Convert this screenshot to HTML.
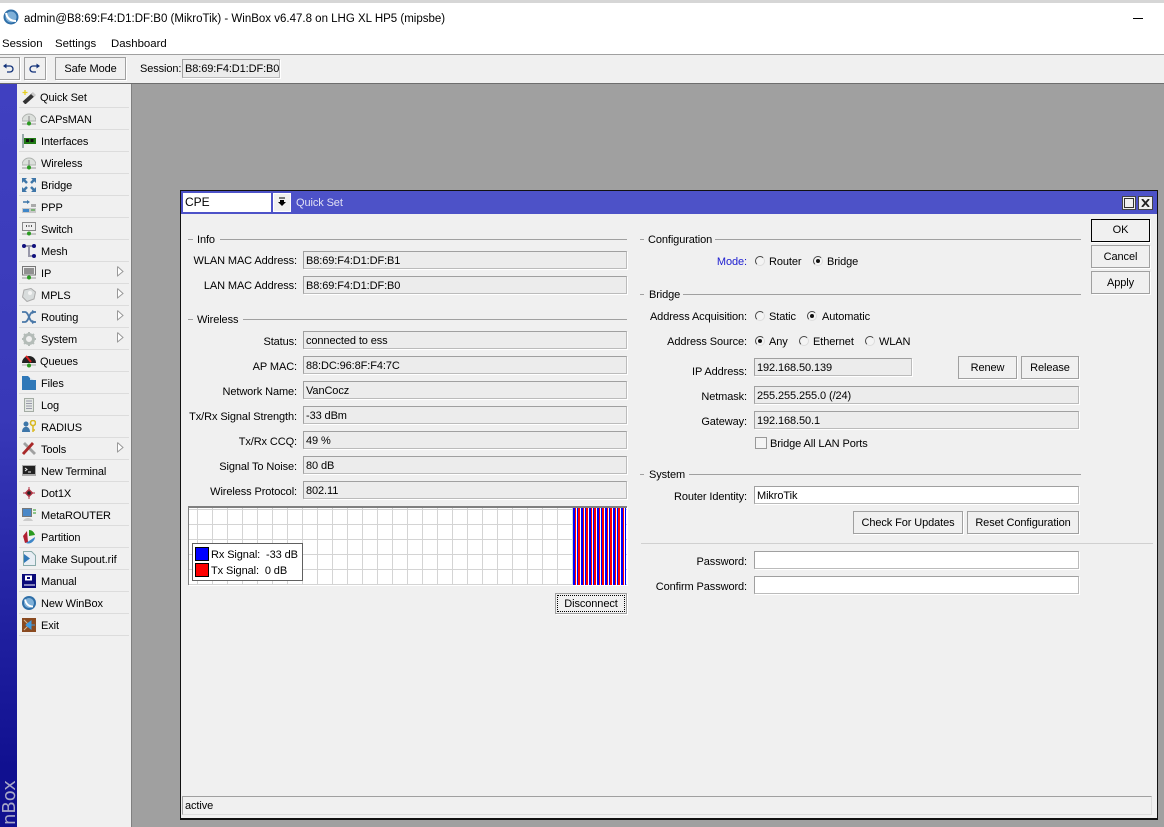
<!DOCTYPE html>
<html><head><meta charset="utf-8"><title>WinBox</title>
<style>
html,body{margin:0;padding:0;width:1164px;height:827px;overflow:hidden;background:#a0a0a0;font-family:"Liberation Sans",sans-serif;font-size:11px;letter-spacing:-.1px;color:#000}
div,span{position:absolute;box-sizing:border-box;white-space:nowrap}
.l{height:18px;line-height:20px;text-align:right}
.t{height:18px;line-height:20px}
.f{height:18px;line-height:18px;padding-left:2px;background:#ececec;border:1px solid;border-color:#a0a0a0 #bbb #bbb #a0a0a0;box-shadow:1px 1px 0 #fff}
.w{background:#fff}
.b{background:#f0f0f0;border:1px solid #a0a0a0;box-shadow:1px 1px 0 #fff;text-align:center}
.g{height:1px;background:#a0a0a0}
.s{left:19px;width:110px;height:1px;background:#dcdcdc}
.m{left:41px;height:18px;line-height:20px}
.r{width:10px;height:10px;border-radius:50%;background:#f4f4f4;border:1px solid #444;border-right-color:#ddd;border-bottom-color:#ddd}
.r.o::after{content:"";position:absolute;left:2px;top:2px;width:4px;height:4px;border-radius:50%;background:#111}
.a{left:117px;width:7px;height:11px}
svg{position:absolute}
</style></head><body>

<!-- top bars -->
<div style="left:0;top:0;width:1164px;height:4px;background:#d6d6d6"></div>
<div style="left:0;top:3px;width:1164px;height:51px;background:#fff"></div>
<div style="left:0;top:54px;width:1164px;height:1px;background:#a0a0a0"></div>
<div style="left:0;top:55px;width:1164px;height:28px;background:#f0f0f0"></div>
<div style="left:0;top:83px;width:1164px;height:1px;background:#6e6e6e"></div>

<svg style="left:3px;top:9px" width="16" height="16" viewBox="0 0 16 16"><circle cx="8" cy="8" r="7.5" fill="#2f6fa8"/><circle cx="8" cy="8" r="5.5" fill="#7fb0d8"/><path d="M3 4c1 5 4 8 10 8" stroke="#fff" stroke-width="2" fill="none"/></svg>
<div class="t" style="left:24px;top:9px;font-size:11.5px;letter-spacing:0">admin@B8:69:F4:D1:DF:B0 (MikroTik) - WinBox v6.47.8 on LHG XL HP5 (mipsbe)</div>
<div style="left:1133px;top:18px;width:10px;height:1px;background:#000"></div>
<div class="t" style="left:2px;top:34px;font-size:11.4px;letter-spacing:0">Session</div>
<div class="t" style="left:55px;top:34px;font-size:11.4px;letter-spacing:0">Settings</div>
<div class="t" style="left:111px;top:34px;font-size:11.4px;letter-spacing:0">Dashboard</div>

<!-- toolbar -->
<div class="b" style="left:-1px;top:57px;width:21px;height:23px"></div>
<svg style="left:2px;top:63px" width="13" height="11" viewBox="0 0 13 11"><path d="M3 3h5a3 3 0 0 1 0 6H5" fill="none" stroke="#12327a" stroke-width="1.3"/><path d="M1 3l3.5-2.5v5z" fill="#12327a"/></svg>
<div class="b" style="left:24px;top:57px;width:22px;height:23px"></div>
<svg style="left:28px;top:63px" width="13" height="11" viewBox="0 0 13 11"><path d="M10 3H5a3 3 0 0 0 0 6h3" fill="none" stroke="#12327a" stroke-width="1.3"/><path d="M12 3L8.5.5v5z" fill="#12327a"/></svg>
<div class="b" style="left:55px;top:57px;width:71px;height:23px;line-height:22px">Safe Mode</div>
<div class="t" style="left:140px;top:59px">Session:</div>
<div class="f" style="left:182px;top:59px;width:98px;height:19px;line-height:18px">B8:69:F4:D1:DF:B0</div>

<!-- sidebar -->
<div style="left:0;top:84px;width:17px;height:743px;background:linear-gradient(#4040c0,#3838b8 45%,#101090 92%,#101090)"></div>
<div style="left:17px;top:84px;width:114px;height:743px;background:#f0f0f0"></div>
<div style="left:131px;top:84px;width:1px;height:743px;background:#808080"></div>
<div style="left:0;top:780px;width:17px;height:47px;overflow:hidden"><span style="left:1px;top:45px;font-size:18px;line-height:18px;letter-spacing:0;font-family:'DejaVu Sans',sans-serif;color:#a8a8c8;transform-origin:0 0;transform:rotate(-90deg);">nBox</span></div>

<div class="s" style="top:107px"></div><div class="s" style="top:129px"></div><div class="s" style="top:151px"></div><div class="s" style="top:173px"></div><div class="s" style="top:195px"></div><div class="s" style="top:217px"></div><div class="s" style="top:239px"></div><div class="s" style="top:261px"></div><div class="s" style="top:283px"></div><div class="s" style="top:305px"></div><div class="s" style="top:327px"></div><div class="s" style="top:349px"></div><div class="s" style="top:371px"></div><div class="s" style="top:393px"></div><div class="s" style="top:415px"></div><div class="s" style="top:437px"></div><div class="s" style="top:459px"></div><div class="s" style="top:481px"></div><div class="s" style="top:503px"></div><div class="s" style="top:525px"></div><div class="s" style="top:547px"></div><div class="s" style="top:569px"></div><div class="s" style="top:591px"></div><div class="s" style="top:613px"></div><div class="s" style="top:635px"></div>

<div class="m" style="top:88px;left:40px">Quick Set</div>
<div class="m" style="top:110px;left:40px">CAPsMAN</div>
<div class="m" style="top:132px">Interfaces</div>
<div class="m" style="top:154px">Wireless</div>
<div class="m" style="top:176px">Bridge</div>
<div class="m" style="top:198px">PPP</div>
<div class="m" style="top:220px">Switch</div>
<div class="m" style="top:242px">Mesh</div>
<div class="m" style="top:264px">IP</div>
<div class="m" style="top:286px">MPLS</div>
<div class="m" style="top:308px">Routing</div>
<div class="m" style="top:330px">System</div>
<div class="m" style="top:352px;left:40px">Queues</div>
<div class="m" style="top:374px">Files</div>
<div class="m" style="top:396px">Log</div>
<div class="m" style="top:418px">RADIUS</div>
<div class="m" style="top:440px">Tools</div>
<div class="m" style="top:462px">New Terminal</div>
<div class="m" style="top:484px">Dot1X</div>
<div class="m" style="top:506px">MetaROUTER</div>
<div class="m" style="top:528px">Partition</div>
<div class="m" style="top:550px">Make Supout.rif</div>
<div class="m" style="top:572px">Manual</div>
<div class="m" style="top:594px">New WinBox</div>
<div class="m" style="top:616px">Exit</div>

<!-- submenu arrows -->
<svg class="a" style="top:266px" width="7" height="11"><path d="M.5.5V10.5M.5.5L6 5.5.5 10" fill="#fff" stroke="#999"/></svg>
<svg class="a" style="top:288px" width="7" height="11"><path d="M.5.5V10.5M.5.5L6 5.5.5 10" fill="#fff" stroke="#999"/></svg>
<svg class="a" style="top:310px" width="7" height="11"><path d="M.5.5V10.5M.5.5L6 5.5.5 10" fill="#fff" stroke="#999"/></svg>
<svg class="a" style="top:332px" width="7" height="11"><path d="M.5.5V10.5M.5.5L6 5.5.5 10" fill="#fff" stroke="#999"/></svg>
<svg class="a" style="top:442px" width="7" height="11"><path d="M.5.5V10.5M.5.5L6 5.5.5 10" fill="#fff" stroke="#999"/></svg>

<!-- sidebar icons -->
<svg style="left:22px;top:90px" width="14" height="14" viewBox="0 0 14 14"><path d="M2 13L12 4" stroke="#333" stroke-width="4"/><path d="M10.500 5.500L12.500 3.500" stroke="#ccc" stroke-width="4"/><path d="M3 0v5M.5 2.500h5" stroke="#e6d020" stroke-width="1.300"/></svg>
<svg style="left:22px;top:112px" width="14" height="14" viewBox="0 0 14 14"><path d="M0 9a7 7 0 0 1 14 0z" fill="#dce0dc" stroke="#b0b4b0"/><path d="M7 4v7" stroke="#888"/><path d="M0 12h14" stroke="#999"/><circle cx="7" cy="11.500" r="2" fill="#2a9a20"/></svg>
<svg style="left:22px;top:134px" width="14" height="14" viewBox="0 0 14 14"><path d="M1 0v14" stroke="#9aa" stroke-width="2"/><rect x="2" y="4" width="12" height="6" fill="#1f7a14"/><rect x="4" y="5" width="3" height="3" fill="#111"/><rect x="8.500" y="5" width="3" height="3" fill="#111"/></svg>
<svg style="left:22px;top:156px" width="14" height="14" viewBox="0 0 14 14"><path d="M0 9a7 7 0 0 1 14 0z" fill="#dce0dc" stroke="#b0b4b0"/><path d="M7 4v7" stroke="#888"/><path d="M0 12h14" stroke="#999"/><circle cx="7" cy="11.500" r="2" fill="#2a9a20"/></svg>
<svg style="left:22px;top:178px" width="14" height="14" viewBox="0 0 14 14"><path d="M1 1l4 4M13 1L9 5M1 13l4-4M13 13L9 9" stroke="#3e76a8" stroke-width="2.500"/><path d="M0 0h5L0 5zM14 0H9l5 5zM0 14h5L0 9zM14 14H9l5-5z" fill="#3e76a8"/></svg>
<svg style="left:22px;top:200px" width="14" height="14" viewBox="0 0 14 14"><path d="M1 2h4" stroke="#3e76a8" stroke-width="1.500"/><path d="M5 0l3 2-3 2z" fill="#3e76a8"/><rect x="0" y="8" width="14" height="5" fill="#c8c8c8"/><rect x="1" y="9" width="6" height="3" fill="#3e86c8"/><rect x="9" y="4" width="5" height="3" fill="#aaa"/><path d="M9 10h4" stroke="#2a9a20"/></svg>
<svg style="left:22px;top:222px" width="14" height="14" viewBox="0 0 14 14"><rect x="0.500" y="0.500" width="13" height="8" fill="#eee" stroke="#888"/><path d="M4 4h1M6.500 4h1M9 4h1" stroke="#222" stroke-width="1.500"/><path d="M0 12h14" stroke="#999"/><circle cx="7" cy="11.500" r="2" fill="#2a9a20"/></svg>
<svg style="left:22px;top:244px" width="14" height="14" viewBox="0 0 14 14"><path d="M2 2h10M7 2v10h5" stroke="#99a" stroke-width="2" fill="none"/><circle cx="2" cy="2" r="2" fill="#12127e"/><circle cx="12" cy="2" r="2" fill="#12127e"/><circle cx="12" cy="12" r="2" fill="#12127e"/></svg>
<svg style="left:22px;top:266px" width="14" height="14" viewBox="0 0 14 14"><rect x="0.500" y="0.500" width="13" height="8.500" fill="#eee" stroke="#777"/><path d="M2 3h10M2 5h10M2 7h10" stroke="#333"/><path d="M0 12h14" stroke="#999"/><circle cx="7" cy="11.500" r="2" fill="#2a9a20"/></svg>
<svg style="left:22px;top:288px" width="14" height="14" viewBox="0 0 14 14"><path d="M2 2L9 0.500 13.500 4 12 11 5 13.500 0.500 9z" fill="#d8dcdc" stroke="#aaa"/><circle cx="8" cy="5" r="2" fill="#f4f4f4"/></svg>
<svg style="left:22px;top:310px" width="14" height="14" viewBox="0 0 14 14"><path d="M0 2h3c4 0 4 10 8 10h3M0 12h3c4 0 4-10 8-10h3" stroke="#4a78a8" stroke-width="1.800" fill="none"/><path d="M10 0l4 2-4 2zM10 10l4 2-4 2z" fill="#4a78a8"/></svg>
<svg style="left:22px;top:332px" width="14" height="14" viewBox="0 0 14 14"><circle cx="7" cy="7" r="4.500" fill="none" stroke="#b4bcb8" stroke-width="3"/><path d="M7 0v14M0 7h14M2 2l10 10M12 2L2 12" stroke="#b4bcb8" stroke-width="2" stroke-dasharray="2.500 9"/></svg>
<svg style="left:22px;top:354px" width="14" height="14" viewBox="0 0 14 14"><path d="M0 9a7 7 0 0 1 14 0z" fill="#222"/><path d="M4 2l5 6" stroke="#e02020" stroke-width="2"/><path d="M0 11h14" stroke="#aaa"/><circle cx="7" cy="11.500" r="2" fill="#2a9a20"/></svg>
<svg style="left:22px;top:376px" width="14" height="14" viewBox="0 0 14 14"><path d="M0 0h6l2 2v2h6v10H0z" fill="#2f78b8"/><path d="M8 2l4 2H8z" fill="#cfe0ee"/></svg>
<svg style="left:24px;top:398px" width="10" height="14" viewBox="0 0 10 14"><rect x="0.500" y="0.500" width="9" height="13" fill="#e4e8e4" stroke="#a4aca4"/><path d="M2 3h6M2 5.500h6M2 8h6M2 10.500h6" stroke="#99a"/></svg>
<svg style="left:22px;top:420px" width="14" height="14" viewBox="0 0 14 14"><circle cx="4" cy="4" r="2.500" fill="#3e76a8"/><path d="M0 12c0-7 8-7 8 0z" fill="#3e76a8"/><circle cx="11" cy="3" r="2.500" fill="none" stroke="#d8b820" stroke-width="1.600"/><path d="M11 6v6M11 10h2" stroke="#d8b820" stroke-width="1.500"/></svg>
<svg style="left:22px;top:442px" width="14" height="14" viewBox="0 0 14 14"><path d="M2 1l11 11" stroke="#a0a0a0" stroke-width="2.800"/><path d="M11 1L1 12" stroke="#a82828" stroke-width="2.800"/></svg>
<svg style="left:22px;top:465px" width="14" height="11" viewBox="0 0 14 11"><rect width="14" height="11" fill="#aaa"/><rect x="1" y="1" width="12" height="8" fill="#222"/><path d="M3 3l2 1.500L3 6M6 7h3" stroke="#eee" fill="none"/></svg>
<svg style="left:23px;top:487px" width="12" height="12" viewBox="0 0 12 12"><path d="M6 3L3 6l3 3 3-3z" fill="none" stroke="#b03040" stroke-width="2"/><path d="M6 0v12M0 6h12" stroke="#b03040" stroke-width="1"/><circle cx="6" cy="6" r="1.800" fill="#222"/></svg>
<svg style="left:22px;top:508px" width="14" height="14" viewBox="0 0 14 14"><rect x="0.500" y="0.500" width="9" height="8" fill="#4a88c8" stroke="#777"/><path d="M11 2h3M11 5h3" stroke="#2a9a20"/><path d="M1 13c2-4 8-4 10 0z" fill="#ccc"/></svg>
<svg style="left:22px;top:530px" width="14" height="14" viewBox="0 0 14 14"><path d="M5 1L1 6l2 7 3-1z" fill="#b02030"/><path d="M7 0v6l6-1c-1-3-3-5-6-5z" fill="#2a9a20"/><path d="M4 13l9-6c0 4-5 8-9 6z" fill="#3e86c8"/></svg>
<svg style="left:23px;top:551px" width="13" height="15" viewBox="0 0 13 15"><path d="M.5.500h8l4 4v10h-12z" fill="#e8eef4" stroke="#8aa"/><path d="M1 3l6 4.500L1 12z" fill="#2f78b8"/></svg>
<svg style="left:22px;top:574px" width="14" height="14" viewBox="0 0 14 14"><rect width="14" height="14" fill="#0a0a7a"/><rect x="3" y="1.500" width="7" height="5" fill="#fff"/><rect x="5" y="3" width="3" height="2" fill="#0a0a7a"/><path d="M2 11h11" stroke="#fff"/></svg>
<svg style="left:22px;top:596px" width="14" height="14" viewBox="0 0 14 14"><circle cx="7" cy="7" r="7" fill="#2f6fa8"/><circle cx="7" cy="7" r="5" fill="#7fb0d8"/><path d="M3 3.500c1 4.500 3.500 7 8 7" stroke="#fff" stroke-width="1.800" fill="none"/></svg>
<svg style="left:22px;top:618px" width="14" height="14" viewBox="0 0 14 14"><rect width="14" height="14" fill="#8a4a20"/><path d="M2 2l5 5-5 5" stroke="#d8b890" fill="none"/><path d="M13 7H7M4 7l5-4v8z" fill="#3e9ae0" stroke="#3e9ae0"/></svg>

<!-- window -->
<div style="left:180px;top:190px;width:978px;height:630px;background:#f0f0f0;border:1px solid #111;border-bottom-width:2px;border-right-width:1px"></div>
<div style="left:181px;top:191px;width:976px;height:23px;background:#4d52c8"></div>
<div style="left:183px;top:193px;width:88px;height:19px;background:#fff;font-size:12px;line-height:18px;padding-left:2px;letter-spacing:0">CPE</div>
<div class="b" style="left:273px;top:193px;width:18px;height:19px;box-shadow:none;border-color:#fff"></div>
<svg style="left:277px;top:197px" width="10" height="10" viewBox="0 0 10 10"><path d="M2 1h6" stroke="#000"/><path d="M3 3h4v2h2L5 9 1 5h2z" fill="#000"/></svg>
<div class="t" style="left:296px;top:193px;color:#e0e0f4">Quick Set</div>
<div class="b" style="left:1122px;top:196px;width:14px;height:14px;box-shadow:none;border-color:#444"></div>
<div style="left:1124px;top:198px;width:10px;height:10px;border:1px solid #333"></div>
<div class="b" style="left:1138px;top:196px;width:15px;height:14px;box-shadow:none;border-color:#444"></div>
<svg style="left:1141px;top:199px" width="9" height="8" viewBox="0 0 9 8"><path d="M1 0l7 8M8 0L1 8" stroke="#222" stroke-width="1.800"/></svg>

<!-- left column -->
<div class="g" style="left:188px;top:239px;width:5px"></div><div class="t" style="left:197px;top:230px">Info</div><div class="g" style="left:220px;top:239px;width:407px"></div>
<div class="l" style="left:180px;top:251px;width:117px">WLAN MAC Address:</div><div class="f" style="left:303px;top:251px;width:324px">B8:69:F4:D1:DF:B1</div>
<div class="l" style="left:180px;top:276px;width:117px">LAN MAC Address:</div><div class="f" style="left:303px;top:276px;width:324px">B8:69:F4:D1:DF:B0</div>

<div class="g" style="left:188px;top:319px;width:5px"></div><div class="t" style="left:197px;top:310px">Wireless</div><div class="g" style="left:243px;top:319px;width:384px"></div>
<div class="l" style="left:180px;top:332px;width:117px">Status:</div><div class="f" style="left:303px;top:331px;width:324px">connected to ess</div>
<div class="l" style="left:180px;top:357px;width:117px">AP MAC:</div><div class="f" style="left:303px;top:356px;width:324px">88:DC:96:8F:F4:7C</div>
<div class="l" style="left:180px;top:382px;width:117px">Network Name:</div><div class="f" style="left:303px;top:381px;width:324px">VanCocz</div>
<div class="l" style="left:180px;top:407px;width:117px">Tx/Rx Signal Strength:</div><div class="f" style="left:303px;top:406px;width:324px">-33 dBm</div>
<div class="l" style="left:180px;top:432px;width:117px">Tx/Rx CCQ:</div><div class="f" style="left:303px;top:431px;width:324px">49 %</div>
<div class="l" style="left:180px;top:457px;width:117px">Signal To Noise:</div><div class="f" style="left:303px;top:456px;width:324px">80 dB</div>
<div class="l" style="left:180px;top:482px;width:117px">Wireless Protocol:</div><div class="f" style="left:303px;top:481px;width:324px">802.11</div>

<!-- graph -->
<div style="left:188px;top:506px;width:439px;height:79px;background-color:#fff;background-image:linear-gradient(90deg,#d4d4d4 1px,transparent 1px),linear-gradient(#d4d4d4 1px,transparent 1px);background-size:15px 15px;background-position:8px 1px;border-top:2px solid #808080;border-left:1px solid #808080;box-shadow:1px 1px 0 #fff"></div>
<div style="left:573px;top:508px;width:53px;height:77px;background:repeating-linear-gradient(90deg,#00f 0,#00f 2px,#f00 2px,#f00 3px,#fff 3px,#fff 4px,#00f 4px,#00f 5px,#f00 5px,#f00 7px,#fff 7px,#fff 8px)"></div>
<div style="left:192px;top:543px;width:111px;height:38px;background:#fff;border:1px solid #606060"></div>
<div style="left:195px;top:547px;width:14px;height:14px;background:#00f;border:1px solid #000"></div>
<div style="left:195px;top:563px;width:14px;height:14px;background:#f00;border:1px solid #000"></div>
<div class="t" style="left:211px;top:545px">Rx Signal:&nbsp; -33 dB</div>
<div class="t" style="left:211px;top:561px">Tx Signal:&nbsp; 0 dB</div>
<div class="b" style="left:555px;top:593px;width:72px;height:21px;line-height:21px">Disconnect</div>
<div style="left:557px;top:595px;width:68px;height:17px;border:1px dotted #000"></div>

<!-- right column -->
<div class="g" style="left:640px;top:239px;width:4px"></div><div class="t" style="left:648px;top:230px">Configuration</div><div class="g" style="left:715px;top:239px;width:366px"></div>
<div class="l" style="left:640px;top:252px;width:107px;color:#2020d0">Mode:</div>
<div class="r" style="left:755px;top:256px"></div><div class="t" style="left:769px;top:252px">Router</div>
<div class="r o" style="left:813px;top:256px"></div><div class="t" style="left:827px;top:252px">Bridge</div>

<div class="g" style="left:640px;top:294px;width:4px"></div><div class="t" style="left:649px;top:285px">Bridge</div><div class="g" style="left:683px;top:294px;width:398px"></div>
<div class="l" style="left:640px;top:307px;width:107px">Address Acquisition:</div>
<div class="r" style="left:755px;top:311px"></div><div class="t" style="left:769px;top:307px">Static</div>
<div class="r o" style="left:807px;top:311px"></div><div class="t" style="left:822px;top:307px">Automatic</div>
<div class="l" style="left:640px;top:332px;width:107px">Address Source:</div>
<div class="r o" style="left:755px;top:336px"></div><div class="t" style="left:769px;top:332px">Any</div>
<div class="r" style="left:799px;top:336px"></div><div class="t" style="left:813px;top:332px">Ethernet</div>
<div class="r" style="left:865px;top:336px"></div><div class="t" style="left:879px;top:332px">WLAN</div>

<div class="l" style="left:640px;top:362px;width:107px">IP Address:</div><div class="f" style="left:754px;top:358px;width:158px">192.168.50.139</div>
<div class="b" style="left:958px;top:356px;width:59px;height:23px;line-height:22px">Renew</div>
<div class="b" style="left:1021px;top:356px;width:58px;height:23px;line-height:22px">Release</div>
<div class="l" style="left:640px;top:387px;width:107px">Netmask:</div><div class="f" style="left:754px;top:386px;width:325px">255.255.255.0 (/24)</div>
<div class="l" style="left:640px;top:412px;width:107px">Gateway:</div><div class="f" style="left:754px;top:411px;width:325px">192.168.50.1</div>
<div style="left:755px;top:437px;width:12px;height:12px;background:#f4f4f4;border:1px solid #999"></div><div class="t" style="left:770px;top:434px">Bridge All LAN Ports</div>

<div class="g" style="left:640px;top:474px;width:4px"></div><div class="t" style="left:649px;top:465px">System</div><div class="g" style="left:689px;top:474px;width:392px"></div>
<div class="l" style="left:640px;top:487px;width:107px">Router Identity:</div><div class="f w" style="left:754px;top:486px;width:325px">MikroTik</div>
<div class="b" style="left:853px;top:511px;width:110px;height:23px;line-height:23px">Check For Updates</div>
<div class="b" style="left:967px;top:511px;width:112px;height:23px;line-height:23px">Reset Configuration</div>
<div style="left:641px;top:543px;width:512px;height:1px;background:#d0d0d0"></div>
<div class="l" style="left:640px;top:552px;width:107px">Password:</div><div class="f w" style="left:754px;top:551px;width:325px"></div>
<div class="l" style="left:640px;top:577px;width:107px">Confirm Password:</div><div class="f w" style="left:754px;top:576px;width:325px"></div>

<!-- action buttons -->
<div class="b" style="left:1091px;top:219px;width:59px;height:23px;line-height:21px;border-color:#000">OK</div>
<div class="b" style="left:1091px;top:245px;width:59px;height:23px;line-height:22px">Cancel</div>
<div class="b" style="left:1091px;top:271px;width:59px;height:23px;line-height:22px">Apply</div>

<!-- status -->
<div style="left:182px;top:796px;width:970px;height:19px;border:1px solid;border-color:#a0a0a0 #ddd #ddd #a0a0a0;line-height:19px;padding-left:2px">active</div>
</body></html>
